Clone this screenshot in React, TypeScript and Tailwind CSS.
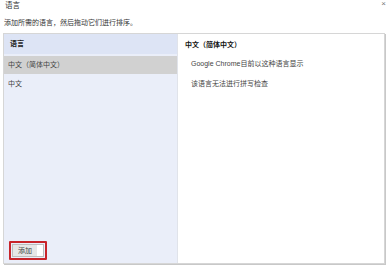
import React from "react";

const font = { fontFamily: '"Liberation Sans", "Noto Sans CJK SC", sans-serif' };

const App: React.FC = () => {
  return (
    <div className="w-[390px] h-[273px] bg-white text-[#444] relative overflow-hidden" style={font}>
      <div className="pl-[5px] pr-[4px] flex justify-between items-start">
        <div className="text-[7.5px] leading-[11px] text-[#333]">语言</div>
        <div className="text-[8px] leading-[8px] text-[#777]">×</div>
      </div>
      <div className="px-[4px] mt-[7px] text-[7px] leading-[10px] text-[#333]">添加所需的语言，然后拖动它们进行排序。</div>
      <div className="mx-[3px] mt-[5px] w-[382px] h-[231px] border border-[#d6d6d6] shadow-[1px_1px_0_#c8c8c8] flex">
        <div className="w-[174px] bg-[#eaeef9] border-r border-[#e0e3ea] flex flex-col">
          <div className="h-[20px] bg-[#dde4f5] pl-[6px] text-[7px] font-bold leading-[20px] text-[#222]">语言</div>
          <div className="mt-[2px] h-[18px] bg-[#d1d1d1] pl-[4px] text-[7px] leading-[18px]">中文（简体中文）</div>
          <div className="h-[20px] pl-[4px] text-[7px] leading-[20px]">中文</div>
          <div className="flex-1" />
          <div className="pl-[5px] pb-[3px]">
            <div className="inline-flex border-[2px] border-[#c8242a] p-[1px] rounded-[1px]">
              <div className="flex border border-[#bdbdbd]">
                <div className="bg-[#e6e6e6] pl-[5px] pr-[5px] text-[7px] leading-[11px] text-[#444]">添加</div>
                <div className="w-[6px] bg-white" />
              </div>
            </div>
          </div>
        </div>
        <div className="flex-1 bg-white flex flex-col pl-[7px]">
          <div className="h-[22px] text-[7px] font-bold leading-[22px] text-[#111]">中文（简体中文）</div>
          <div className="pl-[6px] mt-[-1px] text-[7px] leading-[18px]">Google Chrome目前以这种语言显示</div>
          <div className="pl-[6px] mt-[2px] text-[7px] leading-[18px]">该语言无法进行拼写检查</div>
        </div>
      </div>
    </div>
  );
};

export default App;
